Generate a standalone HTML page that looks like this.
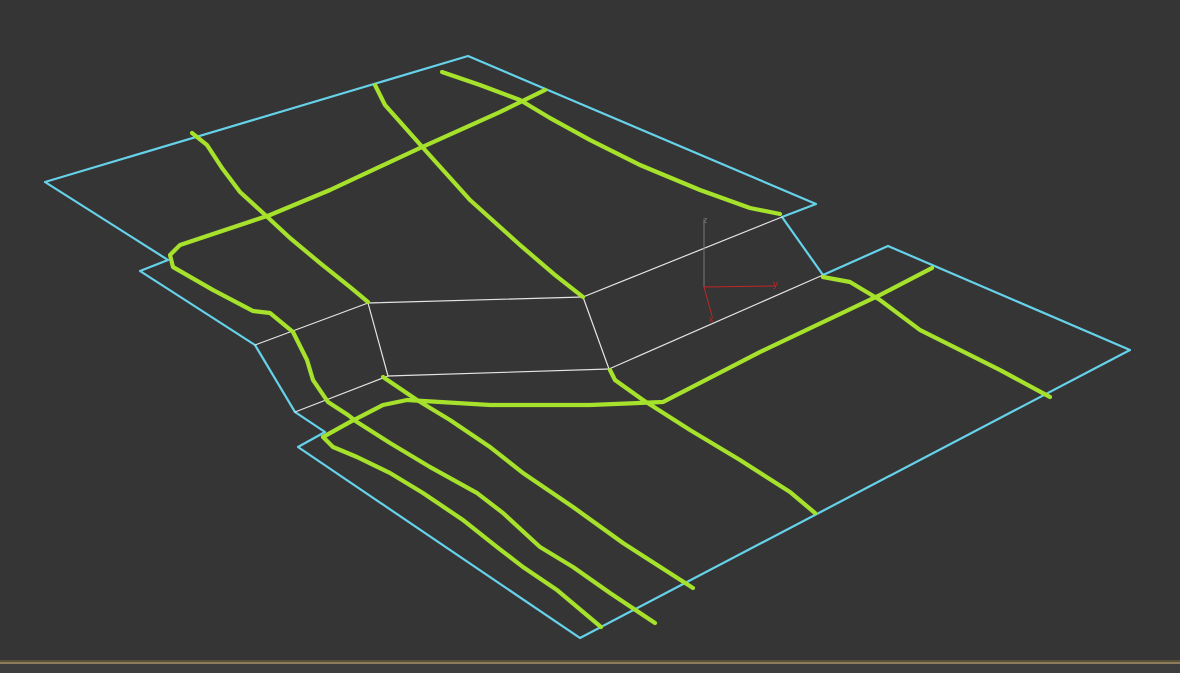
<!DOCTYPE html>
<html><head><meta charset="utf-8"><style>
html,body{margin:0;padding:0;background:#353535;}
svg{display:block}
</style></head><body>
<svg width="1180" height="673" viewBox="0 0 1180 673" xmlns="http://www.w3.org/2000/svg">
<rect width="1180" height="673" fill="#353535"/>
<rect y="660" width="1180" height="2" fill="#5a5038"/>
<rect y="662" width="1180" height="2" fill="#8c7c5c"/>
<rect y="664" width="1180" height="9" fill="#3d3d3d"/>
<g fill="none" stroke-linejoin="round" stroke-linecap="round">
<polyline stroke="#66d2ea" stroke-width="2.2" points="782,217 816,204 468,56 45,182 168,260 140,271 255,345 295,412 325,432 298,447 580,638 1130,350 888,246 823,275 782,217"/>
<g stroke="#e4e4e4" stroke-width="1.2">
<polyline points="255,345 368,303 583,297 782,217"/>
<polyline points="295,412 388,376 609,369 823,275"/>
<line x1="368" y1="303" x2="388" y2="376"/>
<line x1="583" y1="297" x2="609" y2="369"/>
</g>
<line x1="704" y1="287" x2="704" y2="220" stroke="#777" stroke-width="1"/>
<line x1="704" y1="287" x2="775" y2="286" stroke="#c02525" stroke-width="1"/>
<line x1="704" y1="287" x2="712" y2="316" stroke="#c02525" stroke-width="1"/>
<g stroke="#a6e22c" stroke-width="4.2">
<polyline points="192,133 207,145 222,168 240,192 262,212 290,238 320,263 350,287 368,302"/>
<polyline points="375,85 385,105 425,150 470,200 520,245 555,275 583,297"/>
<polyline points="442,72 480,85 520,100 550,118 590,140 640,165 700,190 750,208 780,214"/>
<polyline points="545,90 500,112 420,148 330,190 270,215 180,245 170,255 173,267 213,290 253,311 270,313 293,332 307,360 313,380 328,402 348,415 357,422 390,443 430,467 477,493 503,513 540,547 573,567 610,593 655,623"/>
<polyline points="323,437 333,447 357,457 390,473 423,493 463,520 497,547 523,567 557,590 601,627"/>
<polyline points="383,377 417,400 450,420 490,447 523,473 573,507 623,543 693,588"/>
<polyline points="323,437 350,422 383,405 407,400 490,405 590,405 663,402 760,352 880,295 932,268"/>
<polyline points="610,370 615,380 643,400 690,430 740,460 790,492 815,513"/>
<polyline points="823,277 850,282 880,300 920,330 960,350 1000,370 1050,397"/>
</g>
</g>
<text x="703" y="223" font-family="Liberation Sans, sans-serif" font-size="9" fill="#777">z</text>
<text x="773" y="287" font-family="Liberation Sans, sans-serif" font-size="10" fill="#c02525">y</text>
<text x="709" y="322" font-family="Liberation Sans, sans-serif" font-size="9" fill="#c02525">x</text>
</svg>
</body></html>
